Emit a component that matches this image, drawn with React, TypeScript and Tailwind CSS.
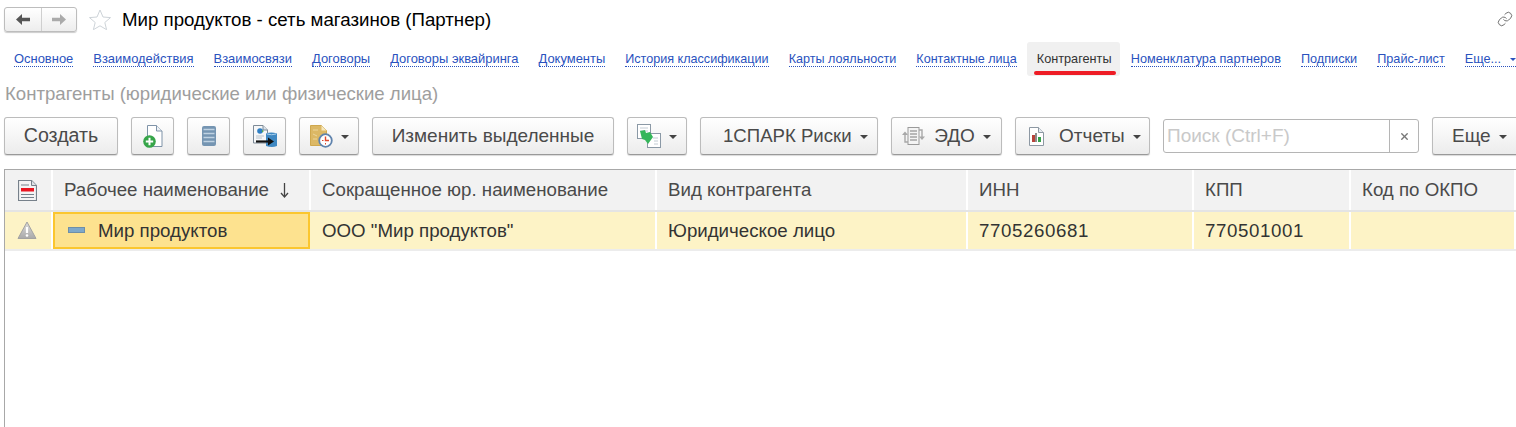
import React from 'react';
import { Link, X } from 'lucide-react';

const TABS = [
  { label: 'Основное', size: 'text-[12.95px]' },
  { label: 'Взаимодействия', size: 'text-[12.95px]' },
  { label: 'Взаимосвязи', size: 'text-[12.95px]' },
  { label: 'Договоры', size: 'text-[12.95px]' },
  { label: 'Договоры эквайринга', size: 'text-[12.95px]' },
  { label: 'Документы', size: 'text-[12.95px]' },
  { label: 'История классификации', size: 'text-[12.6px]' },
  { label: 'Карты лояльности', size: 'text-[12.6px]' },
  { label: 'Контактные лица', size: 'text-[12.6px]' },
];
const TABS_AFTER = ['Номенклатура партнеров', 'Подписки', 'Прайс-лист'];

const COLS = [
  { title: 'Сокращенное юр. наименование', value: 'ООО "Мир продуктов"', w: 'w-[346px]', num: false },
  { title: 'Вид контрагента', value: 'Юридическое лицо', w: 'w-[311px]', num: false },
  { title: 'ИНН', value: '7705260681', w: 'w-[226px]', num: true },
  { title: 'КПП', value: '770501001', w: 'w-[157px]', num: true },
  { title: 'Код по ОКПО', value: '', w: 'flex-1', num: false },
];

const Btn: React.FC<{ className: string; children: React.ReactNode }> = ({ className, children }) => (
  <button className={`h-[38px] shrink-0 flex items-center rounded-[3px] border border-[#bcbcbc] border-b-[#999] bg-gradient-to-b from-white to-[#ececec] shadow-[0_1px_1px_rgba(0,0,0,0.15)] text-[19px] text-[#4a4a4a] ${className}`}>
    {children}
  </button>
);

const Caret = () => <span className="w-0 h-0 border-x-[4px] border-x-transparent border-t-[4px] border-t-[#444] ml-2 mt-[1px]" />;

const NavArrow: React.FC<{ color: string; flip?: boolean }> = ({ color, flip }) => (
  <svg width="14" height="11" viewBox="0 0 14 11" className={flip ? 'rotate-180' : ''}>
    <path d="M0 5.500L6 0v3.800h8v3.400H6V11z" fill={color} />
  </svg>
);

const SortArrow = () => (
  <svg className="ml-[11px]" width="9" height="15" viewBox="0 0 9 15" fill="none">
    <path d="M4.500 0v13" stroke="#444" strokeWidth="1.300" />
    <path d="M1 10l3.500 4L8 10" stroke="#444" strokeWidth="1.300" />
  </svg>
);

const AddDocIcon = () => (
  <svg width="20" height="23" viewBox="0 0 20 23">
    <path d="M4.500 .5h9l5.500 5.500v15.500H4.500z" fill="#fff" stroke="#7f93a8" />
    <path d="M13.500 .5v5.500H19" fill="#eef2f6" stroke="#7f93a8" />
    <circle cx="6.500" cy="16.500" r="6.300" fill="#36a549" />
    <path d="M6.500 12.800v7.400M2.800 16.500h7.400" stroke="#fff" strokeWidth="2" />
  </svg>
);

const StackIcon = () => (
  <svg width="14" height="20" viewBox="0 0 14 20">
    <rect width="14" height="20" rx="2" fill="#7595b2" />
    <path d="M1.500 3.500h11M1.500 7.500h11M1.500 11.500h11M1.500 15.500h11" stroke="#bfd2e2" strokeWidth="1.600" />
  </svg>
);

const ExportIcon = () => (
  <svg width="24" height="23" viewBox="0 0 24 23">
    <path d="M.5.5h9.500l4.500 4.500v13H.5z" fill="#f6f7f8" stroke="#7d8a97" />
    <path d="M10 .5v4.500h4.500" fill="#dbe3ea" stroke="#7d8a97" />
    <circle cx="7" cy="6" r="2.800" fill="#2f7fc4" />
    <path d="M9 5l2 1-2 1.500z" fill="#58a84f" />
    <path d="M3 11h8M3 13h6" stroke="#b8c2cc" />
    <path d="M13 8.500q5-2 11 0V21q-5 2-11 0z" fill="#3f88c2" />
    <path d="M14 9q4.500 1.500 9 0" stroke="#a9d0ec" fill="none" />
    <path d="M3 16.500h13" stroke="#111" strokeWidth="2.200" />
    <path d="M15 12.500l6 4-6 4z" fill="#111" />
  </svg>
);

const ClockDocIcon = () => (
  <svg width="23" height="23" viewBox="0 0 23 23">
    <path d="M.5.5h11l5 5v15H.5z" fill="#dcb865" stroke="#cfa84e" />
    <path d="M11.500.5v5h5z" fill="#f6e7bd" />
    <path d="M3 5h5M3 9l4 2M3 14h4" stroke="#edd69b" />
    <circle cx="15.500" cy="15.500" r="6.300" fill="#fff" stroke="#5f83ad" strokeWidth="1.800" />
    <path d="M15.500 11.500v4h3.500" stroke="#e0492f" strokeWidth="1.400" fill="none" />
    <path d="M12 15.500h1.500M15.500 18v1.500" stroke="#e0492f" />
  </svg>
);

const MoveIcon = () => (
  <svg width="24" height="24" viewBox="0 0 24 24">
    <rect x=".5" y=".5" width="13" height="14" fill="#fff" stroke="#8b99a6" />
    <path d="M3 4h8M3 7h8" stroke="#c3ccd4" />
    <rect x="10.500" y="9.500" width="13" height="14" fill="#fff" stroke="#8b99a6" />
    <path d="M16 14h5M17 17h4M17 20h4" stroke="#c3ccd4" />
    <path d="M3 7l5-1 1 3 4-1 3 5-5 7-3-4-3-1z" fill="#35b65a" />
  </svg>
);

const EdoIcon = () => (
  <svg width="23" height="18" viewBox="0 0 23 18" fill="none">
    <rect x="6" y=".5" width="11" height="17" fill="#f4f4f4" stroke="#9a9a9a" />
    <path d="M8 4h7M8 7h7M8 10h7M8 13h7" stroke="#7d7d7d" />
    <path d="M3 7v8h3" stroke="#a8a8a8" strokeWidth="1.400" />
    <path d="M0 8l3-3.500L6 8z" fill="#a8a8a8" />
    <path d="M20 10V3h-3" stroke="#a8a8a8" strokeWidth="1.400" />
    <path d="M17 9.500l3 3.500 3-3.500z" fill="#a8a8a8" />
  </svg>
);

const ReportIcon = () => (
  <svg width="15" height="19" viewBox="0 0 15 19">
    <path d="M.5.5h9l5 5v13H.5z" fill="#fff" stroke="#8d98a3" />
    <path d="M9.500.5v5h5" fill="#e6ebf0" stroke="#8d98a3" />
    <rect x="3" y="8" width="3" height="7" fill="#b8433a" />
    <rect x="6" y="6" width="2" height="9" fill="#8d8d8d" />
    <rect x="9" y="10" width="3" height="5" fill="#37a24a" />
  </svg>
);

const TableHeadIcon = () => (
  <svg width="19" height="21" viewBox="0 0 19 21">
    <path d="M.5.5h13l5 5v15H.5z" fill="#f4f4f4" stroke="#77818b" strokeWidth="1.200" />
    <path d="M13.500.5v5h5" fill="#dde2e6" stroke="#77818b" />
    <path d="M3 5h8M3 14.500h13M3 17.500h13" stroke="#77818b" />
    <rect x="3" y="8" width="13" height="3.500" fill="#ea1520" />
  </svg>
);

const WarnIcon = () => (
  <svg width="20" height="19" viewBox="0 0 20 19">
    <defs>
      <linearGradient id="warnFill" x1="0" y1="0" x2="0" y2="1">
        <stop offset="0" stopColor="#dcdcdc" />
        <stop offset="1" stopColor="#a9a9a9" />
      </linearGradient>
    </defs>
    <path d="M10 1l9 16.500H1z" fill="url(#warnFill)" stroke="#a2a2a2" strokeLinejoin="round" />
    <path d="M10 6v6" stroke="#fff" strokeWidth="2.200" />
    <circle cx="10" cy="14.500" r="1.300" fill="#fff" />
  </svg>
);

const App: React.FC = () => {
  return (
    <div className="w-[1516px] h-[427px] overflow-hidden bg-white font-['Liberation_Sans',Arial,sans-serif]">
      {/* Title row */}
      <div className="h-[42px] pt-[7px] pl-1 pr-[3px] flex items-start">
        <div className="w-[73px] h-[25px] flex rounded-[3px] border border-[#bdbdbd] bg-gradient-to-b from-white to-[#ededed] shadow-[0_1px_1px_rgba(0,0,0,0.2)]">
          <div className="w-[37px] flex items-center justify-center border-r border-[#cfcfcf]">
            <NavArrow color="#555" />
          </div>
          <div className="flex-1 flex items-center justify-center">
            <NavArrow color="#aaa" flip />
          </div>
        </div>
        <svg className="ml-3 mt-[2px]" width="22" height="21" viewBox="0 0 22 21">
          <path d="M11 1l3 7 7.500.6-5.700 4.900 1.800 7.200L11 16.800 4.400 20.700l1.800-7.200L.5 8.600 8 8z" fill="#fff" stroke="#cdd3d8" />
        </svg>
        <h1 className="ml-[11px] mt-[3px] text-[18.7px] leading-[20px] text-black font-normal whitespace-nowrap">Мир продуктов - сеть магазинов (Партнер)</h1>
        <Link className="ml-auto mt-[4px] w-[16px] h-[16px] text-[#666]" strokeWidth={1.4} />
      </div>

      {/* Tabs */}
      <div className="h-[34px] pl-[14px] flex items-center gap-5 text-[12.7px] whitespace-nowrap">
        {TABS.map((t) => (
          <span key={t.label} className={`mt-[1px] text-[#2a52be] border-b border-dotted border-[#2a52be] leading-[14px] ${t.size}`}>{t.label}</span>
        ))}
        <span className="relative h-[34px] w-[93px] shrink-0 -ml-[10px] -mr-[9px] pl-[10px] pt-[1px] flex items-center rounded-[3px] bg-[#f0f0f0] text-[#333]">
          Контрагенты
          <span className="absolute left-[7px] top-[29px] w-[82px] h-[4px] rounded-full bg-[#ee1c25]" />
        </span>
        {TABS_AFTER.map((t) => (
          <span key={t} className="mt-[1px] text-[#2a52be] border-b border-dotted border-[#2a52be] leading-[14px]">{t}</span>
        ))}
        <span className="mt-[1px] flex-1 flex items-center text-[#2a52be] border-b border-dotted border-[#2a52be] leading-[14px]">
          Еще...
          <span className="ml-auto w-0 h-0 border-x-[3px] border-x-transparent border-t-[3px] border-t-[#2a52be]" />
        </span>
      </div>

      {/* Section caption */}
      <div className="h-[41px] pl-[5px] pt-[8px] text-[18.6px] leading-[20px] text-[#9e9e9e] whitespace-nowrap">Контрагенты (юридические или физические лица)</div>

      {/* Toolbar */}
      <div className="pl-1 flex items-center gap-[13px] whitespace-nowrap w-[1560px]">
        <Btn className="w-[114px] justify-center"><span className="text-[19.6px]">Создать</span></Btn>
        <Btn className="w-[43px] justify-center"><AddDocIcon /></Btn>
        <Btn className="w-[43px] justify-center"><StackIcon /></Btn>
        <Btn className="w-[43px] justify-center"><ExportIcon /></Btn>
        <Btn className="w-[60px] justify-center"><ClockDocIcon /><Caret /></Btn>
        <Btn className="w-[242px] justify-center">Изменить выделенные</Btn>
        <Btn className="w-[60px] justify-center"><MoveIcon /><Caret /></Btn>
        <Btn className="w-[178px] justify-start pl-[22px]"><span className="text-[18.6px]">1СПАРК Риски</span><Caret /></Btn>
        <Btn className="w-[111px] justify-center"><EdoIcon /><span className="ml-[9px]">ЭДО</span><Caret /></Btn>
        <Btn className="w-[135px] justify-start pl-[13px]"><ReportIcon /><span className="ml-[15px]">Отчеты</span><Caret /></Btn>
        <div className="w-[256px] h-[34px] shrink-0 flex rounded-[3px] border border-[#b5b5b5] bg-white text-[19px] text-[#c9c9c9]">
          <span className="flex-1 pl-[3px] leading-[32px]">Поиск (Ctrl+F)</span>
          <span className="w-[29px] flex items-center justify-center border-l border-[#b5b5b5]">
            <X className="w-[11px] h-[11px] text-[#777]" strokeWidth={3} />
          </span>
        </div>
        <Btn className="w-[100px] justify-start pl-[19px]">Еще<Caret /></Btn>
      </div>

      {/* Table */}
      <div className="mt-[14px] ml-1 h-[258px] border-l border-t border-[#a8a8a8] text-[#4a4a4a] text-[18.7px] whitespace-nowrap">
        <div className="h-[42px] flex bg-[#f2f2f2] border-b-2 border-[#e4e4e4]">
          <div className="w-[48px] flex items-center justify-center border-r-2 border-white pr-[2px]"><TableHeadIcon /></div>
          <div className="w-[258px] flex items-center pl-[11px] border-r-2 border-white">
            Рабочее наименование
            <SortArrow />
          </div>
          {COLS.map((c) => (
            <div key={c.title} className={`${c.w} flex items-center pl-[11px] border-r-2 border-white`}>{c.title}</div>
          ))}
        </div>
        <div className="h-[39px] flex bg-[#fdf3c6] border-b-2 border-[#ececec] text-[#333]">
          <div className="w-[48px] flex items-center justify-center border-r-2 border-white pr-[2px]"><WarnIcon /></div>
          <div className="w-[257px] mr-[1px] flex items-center pl-[13px] pt-[1px] bg-[#fde28f] border-2 border-[#fbc62f]">
            <span className="w-[17px] h-[6px] mr-[13px] -mt-[2px] bg-[#7fa8c9] border border-[#6f8fa8]" />
            Мир продуктов
          </div>
          {COLS.map((c) => (
            <div key={c.title} className={`${c.w} flex items-center pl-[11px] pt-[1px] border-r-2 border-white ${c.num ? 'tracking-[0.6px]' : ''}`}>{c.value}</div>
          ))}
        </div>
      </div>
    </div>
  );
};

export default App;
